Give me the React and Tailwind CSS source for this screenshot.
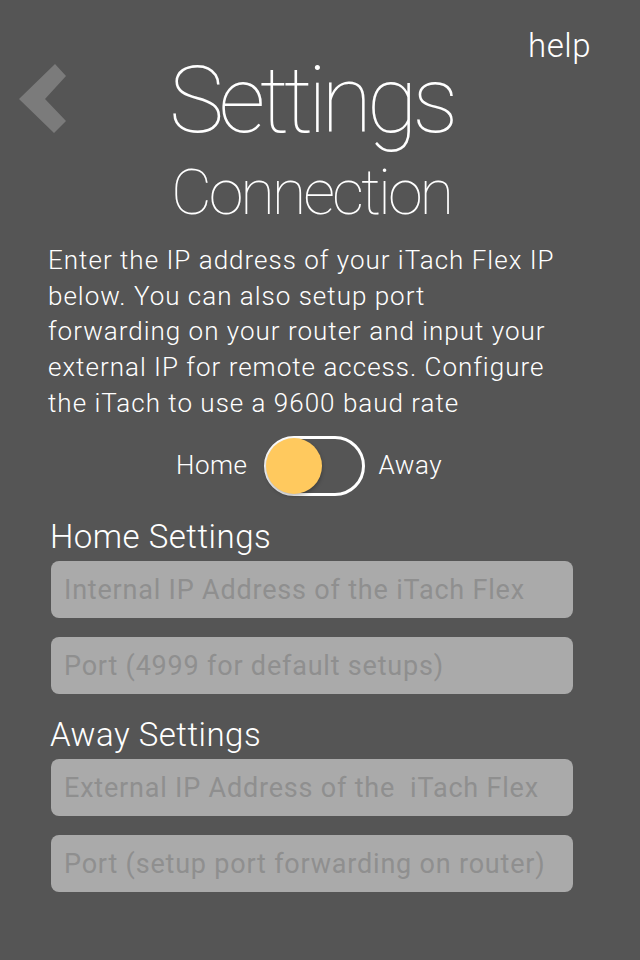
export default function App() {
  const font = { fontFamily: "Roboto, 'Liberation Sans', sans-serif" };
  const input = "h-[57px] rounded-[8px] bg-[#aaaaaa] pl-[13px] pt-[2px] flex items-center text-[27px] tracking-[0.8px] text-[#8f8f8f] whitespace-pre";
  return (
    <div className="w-[640px] h-[960px] bg-[#555555] text-white overflow-hidden" style={font}>
      <div className="flex items-start">
        <div className="w-[111px] pl-[19px] pt-[64px]">
          <svg width="47" height="69" viewBox="0 0 47 69">
            <polygon points="0,35 36,0 47,12 26,35 47,57 35,69" fill="#7b7b7b" />
          </svg>
        </div>
        <div className="flex-1 flex flex-col items-center pt-[51px]">
          <div className="text-[93px] leading-[100px] font-thin tracking-[-5.5px]">Settings</div>
          <div className="mt-[7px] text-[63px] leading-[70px] font-thin tracking-[-3px]">Connection</div>
        </div>
        <div className="w-[129px] pt-[26px] pr-[49px] text-right text-[33px] leading-[40px] font-light tracking-[0.5px]">help</div>
      </div>
      <div className="mt-[15px] pl-[48px] text-[26px] leading-[35.7px] font-light tracking-[1px] whitespace-nowrap">
        Enter the IP address of your iTach Flex IP<br />
        below. You can also setup port<br />
        forwarding on your router and input your<br />
        external IP for remote access. Configure<br />
        the iTach to use a 9600 baud rate
      </div>
      <div className="mt-[14px] flex items-center pl-[176px]">
        <span className="text-[26px] font-light tracking-[0.5px]">Home</span>
        <div className="ml-[17px] w-[101px] h-[60px] rounded-full border-[3px] border-white flex items-center">
          <div className="w-[56px] h-[56px] -ml-[1px] rounded-full bg-[#ffc95e] shadow-[0_2px_4px_rgba(0,0,0,0.3)]" />
        </div>
        <span className="ml-[13px] text-[26px] font-light tracking-[0.5px]">Away</span>
      </div>
      <div className="mt-[21px] pl-[50px] text-[33px] leading-[40px] font-light tracking-[0.5px]">Home Settings</div>
      <div className="mt-[4px] pl-[51px] pr-[67px] flex flex-col gap-[19px]">
        <div className={input}>Internal IP Address of the iTach Flex</div>
        <div className={input}>Port (4999 for default setups)</div>
      </div>
      <div className="mt-[21px] pl-[50px] text-[33px] leading-[40px] font-light tracking-[0.5px]">Away Settings</div>
      <div className="mt-[4px] pl-[51px] pr-[67px] flex flex-col gap-[19px]">
        <div className={input}>External IP Address of the  iTach Flex</div>
        <div className={input}>Port (setup port forwarding on router)</div>
      </div>
    </div>
  );
}
